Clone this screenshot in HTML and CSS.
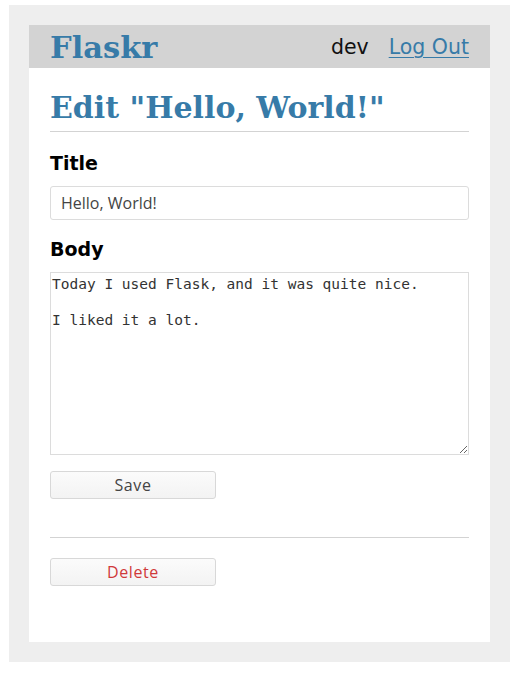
FILE: index.html
```html
<!DOCTYPE html>
<html lang="en">
<head>
<meta charset="utf-8">
<title>Edit "Hello, World!" - Flaskr</title>
<link rel="stylesheet" href="styles.css">
</head>
<body>
<div class="page">
  <div class="sheet">
    <nav class="nav">
      <h1 class="brand"><a href="#">Flaskr</a></h1>
      <ul class="nav-links">
        <li><span class="user">dev</span></li>
        <li><a class="logout" href="#">Log Out</a></li>
      </ul>
    </nav>
    <section class="content">
      <header class="content-header">
        <h1 class="title">Edit "Hello, World!"</h1>
      </header>
      <form class="form">
        <label class="label" for="title">Title</label>
        <input class="field" id="title" name="title" value="Hello, World!">
        <label class="label label-body" for="body">Body</label>
        <textarea class="area" id="body" name="body">Today I used Flask, and it was quite nice.

I liked it a lot.</textarea>
        <input class="btn" type="submit" value="Save">
      </form>
      <hr class="rule">
      <form class="form form-delete">
        <input class="btn danger" type="submit" value="Delete">
      </form>
    </section>
  </div>
</div>
</body>
</html>
```

FILE: styles.css
```css
html, body {
  margin: 0;
  padding: 0;
  background: #fff;
}

.page {
  margin: 5px 10px 0 9px;
  padding: 20px;
  background: #eee;
  font-family: "DejaVu Sans", sans-serif;
}

.sheet {
  background: #fff;
  height: 617px;
}

.nav {
  background: #d3d3d3;
  height: 43px;
  display: flex;
  align-items: center;
  padding: 0 21px;
}

.brand {
  flex: auto;
  margin: 0;
  font-family: "DejaVu Serif", serif;
  font-size: 30.5px;
  font-weight: bold;
  line-height: 36px;
}

.brand a {
  color: #377ba8;
  text-decoration: none;
}

.nav-links {
  display: flex;
  list-style: none;
  margin: 0;
  padding: 0;
  gap: 20px;
  font-size: 20.5px;
  line-height: 24px;
}

.user {
  color: #111;
}

.logout {
  color: #377ba8;
  text-decoration: underline;
  text-decoration-thickness: 1px;
  text-underline-offset: 3px;
}

.content {
  padding: 0 21px;
}

.content-header {
  margin-top: 22px;
  padding-bottom: 5px;
  border-bottom: 1px solid #d3d3d3;
}

.title {
  margin: 0;
  font-family: "DejaVu Serif", serif;
  font-size: 30px;
  font-weight: bold;
  line-height: 36px;
  color: #377ba8;
}

.form {
  display: flex;
  flex-direction: column;
  margin: 20px 0 0;
}

.label {
  font-weight: bold;
  font-size: 19px;
  line-height: 22px;
  color: #000;
  margin-bottom: 12px;
}

.field {
  box-sizing: border-box;
  height: 34px;
  margin: 0 0 18px;
  padding: 0 10px;
  border: 1px solid #dcdcdc;
  border-radius: 3px;
  font-family: "Open Sans", sans-serif;
  font-size: 16px;
  color: #444;
  background: #fff;
  outline: none;
}

.area {
  box-sizing: border-box;
  height: 183px;
  margin: 0 0 16px;
  padding: 2px 1px;
  border: 1px solid #dcdcdc;
  border-radius: 0;
  font-family: "DejaVu Sans Mono", monospace;
  font-size: 14.5px;
  line-height: 18px;
  color: #333;
  resize: vertical;
  background: #fff;
  outline: none;
}

.btn {
  align-self: flex-start;
  box-sizing: border-box;
  width: 166px;
  height: 28px;
  margin: 0;
  padding: 0;
  border: 1px solid #d8d8d8;
  border-radius: 3px;
  background: linear-gradient(#fbfbfb, #f3f3f3);
  font-family: "Open Sans", sans-serif;
  font-size: 16px;
  letter-spacing: 0.6px;
  color: #444;
}

.danger {
  color: #d0393a;
}

.rule {
  margin: 38px 0 0;
  border: none;
  border-top: 1px solid #d3d3d3;
  height: 0;
}

.form-delete {
  margin-top: 20px;
}
```
